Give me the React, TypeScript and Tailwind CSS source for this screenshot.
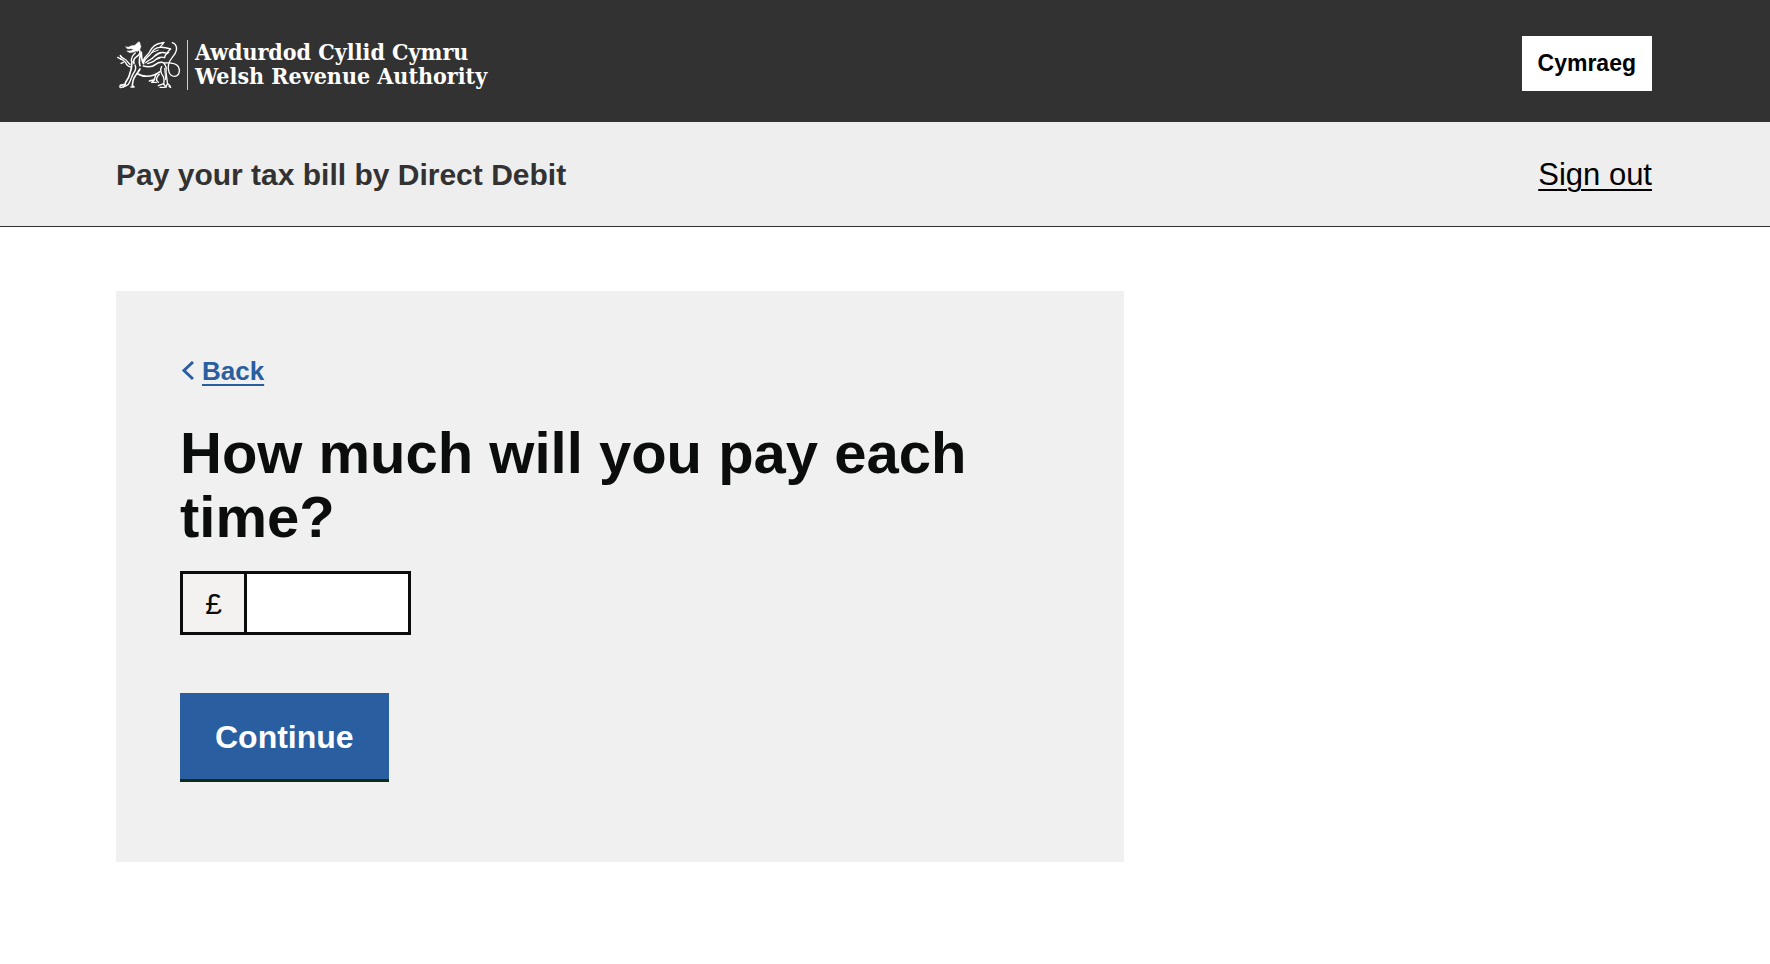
import React from 'react';

function DragonMark() {
  return (
    <svg
      viewBox="48 45 198 150"
      className="h-[50px] w-[66px] shrink-0"
      fill="none"
      stroke="white"
      strokeWidth="5"
      strokeLinecap="round"
      strokeLinejoin="round"
      aria-hidden="true"
    >
      {/* head and neck */}
      <path
        fill="white"
        strokeWidth="1"
        d="M77 65l9 1 8-4 10-1 12-11 3 1 4 14-3 8-6 6-7 0-8 3-10 1-9-5 13-1 8-4-9-2-9 1z"
      />
      <path d="M119 76c3 8-1 14-9 19c-9 6-11 12-8 20" />
      <path d="M106 84c-8 6-12 14-12 24" strokeWidth="4" />
      {/* raised claw */}
      <path d="M94 126c-9-1-14-6-17-13c-4-6-10-9-17-12M90 118c-6-4-8-12-16-16c-5-3-9-4-13-9" strokeWidth="4" />
      <path d="M62 102l-9-5M66 99l-5-8M70 112l-7 3" strokeWidth="4" />
      {/* chest, belly and fore legs */}
      <path d="M96 110c-2 10 0 16-3 24c-3 9-4 14-6 20c-3 9-10 14-12 24l-14 3" />
      <path d="M105 120c5 10 2 16-4 24c-7 10-7 20-16 34l-8 5-15 5" strokeWidth="4" />
      <path d="M120 132c-6 10-13 18-18 27c-4 8-4 15-5 22l5 5h-9" />
      <path d="M62 181l-3 5M76 179l-6 7" strokeWidth="4" />
      <path d="M112 146c14 8 32 10 50 4c8-2 13-6 18-10" />
      {/* wing */}
      <path d="M120 122c-4-14-1-28 4-40c1 14 0 26 7 34" />
      <path d="M130 114c-3-16 11-20 18-32c6-13 15-25 36-28l8-2-12 15c-15 1-20 8-26 17c-7 11-18 14-24 30z" strokeWidth="4" />
      <path d="M178 67c12-1 22 1 34 5c-5 4-9 7-11 13c-18-6-32 1-40 11c-7 8-15 8-24 17" strokeWidth="4" />
      <path d="M206 82c-9 5-12 9-12 16c-16-5-23 1-31 9c-5 5-12 5-20 9" strokeWidth="4" />
      <path d="M155 83l20-8M164 94l18-10M168 104l13-5" strokeWidth="3" />
      <path d="M130 123c15 4 29 2 37-5c5-4 12-7 20-6" />
      {/* tail */}
      <path d="M217 53c10 4 14 13 12 23c-3 16-19 24-23 40c-4 17 1 38 17 38c14 0 19-17 12-29c-6-10-22-12-42-11" strokeWidth="4" />
      {/* hind legs */}
      <path d="M190 113c8 7 10 17 8 28c1 13 4 22 4 34l9 9M185 125c-6 10-1 22 5 30c4 8 3 14 1 23l8 8" strokeWidth="4" />
      <path d="M191 176l-16 6M202 178l-7 9h-15M207 184l5 3" strokeWidth="4" />
      <path d="M194 130l3 34" strokeWidth="3" />
      <path d="M171 145c-7 6-4 12-9 19l-14 4M178 148c-6 6-10 11-8 18l5 6M164 164l-9 8h14" strokeWidth="4" />
    </svg>
  );
}

export default function App() {
  return (
    <div className="min-h-screen bg-white font-['Liberation_Sans',Arial,sans-serif] text-[#0b0c0c]">
      <header className="flex items-start justify-between bg-[#323232] pt-9 pr-[118px] pb-[31px] pl-[116px]">
        <a href="#" className="mt-1 flex h-[50px] items-start text-white">
          <DragonMark />
          <span className="ml-[5px] h-full w-px bg-[#cfcfcf]" />
          <span className="ml-[7px] font-['DejaVu_Serif_Condensed','DejaVu_Serif',serif] text-[23px] leading-6 font-bold whitespace-nowrap">
            Awdurdod Cyllid Cymru
            <br />
            Welsh Revenue Authority
          </span>
        </a>
        <button type="button" className="bg-white px-4 py-3 text-[23px] leading-[31px] font-bold text-black">
          Cymraeg
        </button>
      </header>
      <div className="flex items-center justify-between border-b border-[#323232] bg-[#eeeeee] pt-[35px] pr-[118px] pb-[33px] pl-[116px]">
        <span className="text-[30px] leading-9 font-bold text-[#323232]">Pay your tax bill by Direct Debit</span>
        <a href="#" className="text-[31px] leading-9 text-black underline decoration-2 underline-offset-4">
          Sign out
        </a>
      </div>
      <main className="py-16 pr-[118px] pl-[116px]">
        <form className="w-full max-w-[1008px] bg-[#f0f0f0] px-16 pt-16 pb-20" onSubmit={(e) => e.preventDefault()}>
          <a href="#" className="flex items-center gap-2 text-[26px] leading-8 font-bold text-[#295ea1]">
            <svg viewBox="0 0 14 20" className="h-5 w-3.5" fill="none" stroke="currentColor" strokeWidth="3" aria-hidden="true">
              <path d="M13 1L4 9.5L13 18" />
            </svg>
            <span className="underline decoration-2 underline-offset-4">Back</span>
          </a>
          <h1 className="mt-[34px] text-[58px] leading-16 font-bold">
            <label htmlFor="amount">How much will you pay each time?</label>
          </h1>
          <div className="mt-[22px] flex w-[231px] border-[3px] border-[#0b0c0c]">
            <span className="flex h-[58px] w-16 items-center justify-center border-r-[3px] border-[#0b0c0c] bg-[#f3f2f1] text-[30px]" aria-hidden="true">
              £
            </span>
            <input id="amount" name="amount" type="text" inputMode="decimal" className="min-w-0 flex-1 bg-white px-2 text-[30px]" />
          </div>
          <button type="submit" className="mt-[58px] block border-b-[3px] border-[#0e2b1c] bg-[#295ea1] px-[35px] pt-[25px] pb-[23px] text-[32px] leading-[38px] font-bold text-white">
            Continue
          </button>
        </form>
      </main>
    </div>
  );
}
